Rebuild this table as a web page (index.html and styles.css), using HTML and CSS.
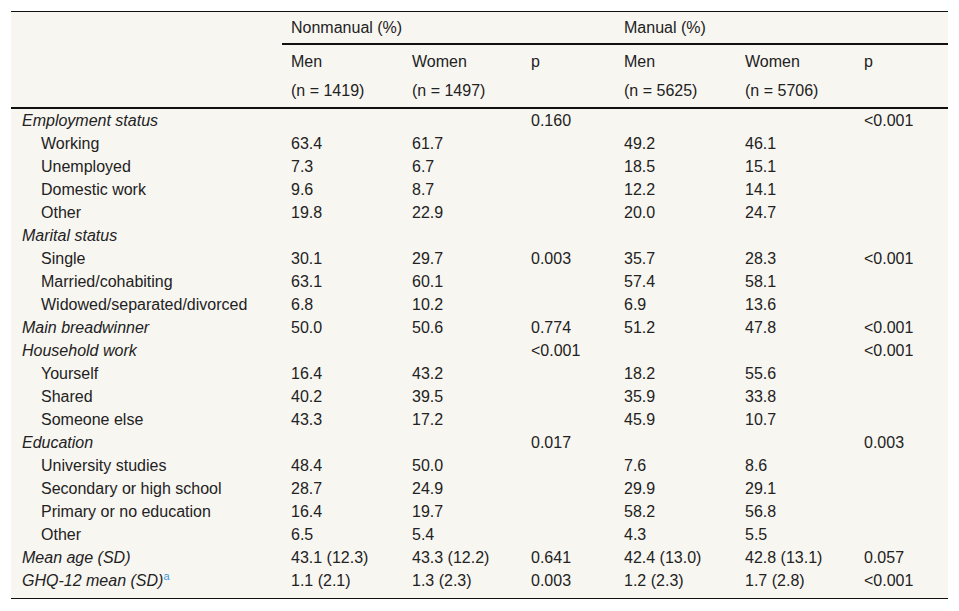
FILE: index.html
```html
<!DOCTYPE html>
<html>
<head>
<meta charset="utf-8">
<link rel="stylesheet" href="styles.css">
</head>
<body>
<table class="tbl">
<colgroup>
<col class="c-label"><col class="c-a"><col class="c-b"><col class="c-p"><col class="c-a"><col class="c-b"><col class="c-p">
</colgroup>
<thead>
<tr class="h1"><th></th><th colspan="3" class="grp">Nonmanual (%)</th><th colspan="3" class="grp">Manual (%)</th></tr>
<tr class="h2"><th></th><th>Men</th><th>Women</th><th>p</th><th>Men</th><th>Women</th><th>p</th></tr>
<tr class="h3"><th></th><th>(n = 1419)</th><th>(n = 1497)</th><th></th><th>(n = 5625)</th><th>(n = 5706)</th><th></th></tr>
</thead>
<tbody>
<tr><td class="cat">Employment status</td><td></td><td></td><td>0.160</td><td></td><td></td><td>&lt;0.001</td></tr>
<tr><td class="sub">Working</td><td>63.4</td><td>61.7</td><td></td><td>49.2</td><td>46.1</td><td></td></tr>
<tr><td class="sub">Unemployed</td><td>7.3</td><td>6.7</td><td></td><td>18.5</td><td>15.1</td><td></td></tr>
<tr><td class="sub">Domestic work</td><td>9.6</td><td>8.7</td><td></td><td>12.2</td><td>14.1</td><td></td></tr>
<tr><td class="sub">Other</td><td>19.8</td><td>22.9</td><td></td><td>20.0</td><td>24.7</td><td></td></tr>
<tr><td class="cat">Marital status</td><td></td><td></td><td></td><td></td><td></td><td></td></tr>
<tr><td class="sub">Single</td><td>30.1</td><td>29.7</td><td>0.003</td><td>35.7</td><td>28.3</td><td>&lt;0.001</td></tr>
<tr><td class="sub">Married/cohabiting</td><td>63.1</td><td>60.1</td><td></td><td>57.4</td><td>58.1</td><td></td></tr>
<tr><td class="sub">Widowed/separated/divorced</td><td>6.8</td><td>10.2</td><td></td><td>6.9</td><td>13.6</td><td></td></tr>
<tr><td class="cat">Main breadwinner</td><td>50.0</td><td>50.6</td><td>0.774</td><td>51.2</td><td>47.8</td><td>&lt;0.001</td></tr>
<tr><td class="cat">Household work</td><td></td><td></td><td>&lt;0.001</td><td></td><td></td><td>&lt;0.001</td></tr>
<tr><td class="sub">Yourself</td><td>16.4</td><td>43.2</td><td></td><td>18.2</td><td>55.6</td><td></td></tr>
<tr><td class="sub">Shared</td><td>40.2</td><td>39.5</td><td></td><td>35.9</td><td>33.8</td><td></td></tr>
<tr><td class="sub">Someone else</td><td>43.3</td><td>17.2</td><td></td><td>45.9</td><td>10.7</td><td></td></tr>
<tr><td class="cat">Education</td><td></td><td></td><td>0.017</td><td></td><td></td><td>0.003</td></tr>
<tr><td class="sub">University studies</td><td>48.4</td><td>50.0</td><td></td><td>7.6</td><td>8.6</td><td></td></tr>
<tr><td class="sub">Secondary or high school</td><td>28.7</td><td>24.9</td><td></td><td>29.9</td><td>29.1</td><td></td></tr>
<tr><td class="sub">Primary or no education</td><td>16.4</td><td>19.7</td><td></td><td>58.2</td><td>56.8</td><td></td></tr>
<tr><td class="sub">Other</td><td>6.5</td><td>5.4</td><td></td><td>4.3</td><td>5.5</td><td></td></tr>
<tr><td class="cat">Mean age (SD)</td><td>43.1 (12.3)</td><td>43.3 (12.2)</td><td>0.641</td><td>42.4 (13.0)</td><td>42.8 (13.1)</td><td>0.057</td></tr>
<tr class="last"><td class="cat">GHQ-12 mean (SD)<sup class="fn">a</sup></td><td>1.1 (2.1)</td><td>1.3 (2.3)</td><td>0.003</td><td>1.2 (2.3)</td><td>1.7 (2.8)</td><td>&lt;0.001</td></tr>
</tbody>
</table>
</body>
</html>
```
FILE: styles.css
```css
html, body {
  margin: 0;
  padding: 0;
  background: #ffffff;
}
body {
  padding: 11px 0 0 11px;
  font-family: "Liberation Sans", Arial, sans-serif;
  font-size: 16px;
  color: #222222;
}
.tbl {
  width: 937px;
  border-collapse: collapse;
  table-layout: fixed;
  background: #f8f6f1;
  border-top: 1px solid #111111;
  border-bottom: 1px solid #111111;
}
.c-label { width: 271px; }
.c-a { width: 121px; }
.c-b { width: 119px; }
.c-p { width: 93px; }
.tbl th, .tbl td {
  text-align: left;
  font-weight: normal;
  line-height: 17px;
  padding: 3px 0 3px 9px;
  white-space: nowrap;
  vertical-align: middle;
}
.tbl th:first-child, .tbl td:first-child {
  padding-left: 11px;
}
.h1 th {
  padding-top: 7px;
  padding-bottom: 7px;
}
.h1 th.grp {
  border-bottom: 2px solid #111111;
}
.h2 th {
  padding-top: 8px;
  padding-bottom: 6px;
}
.h3 th {
  padding-top: 6px;
  padding-bottom: 8px;
  border-bottom: 2px solid #111111;
}
.tbl td.cat {
  font-style: italic;
}
.tbl td.sub {
  padding-left: 30px;
}
.last td {
  padding-bottom: 9px;
}
.fn {
  color: #3a9bdc;
  font-style: normal;
  font-size: 11px;
  line-height: 0;
  vertical-align: 6px;
}
```
